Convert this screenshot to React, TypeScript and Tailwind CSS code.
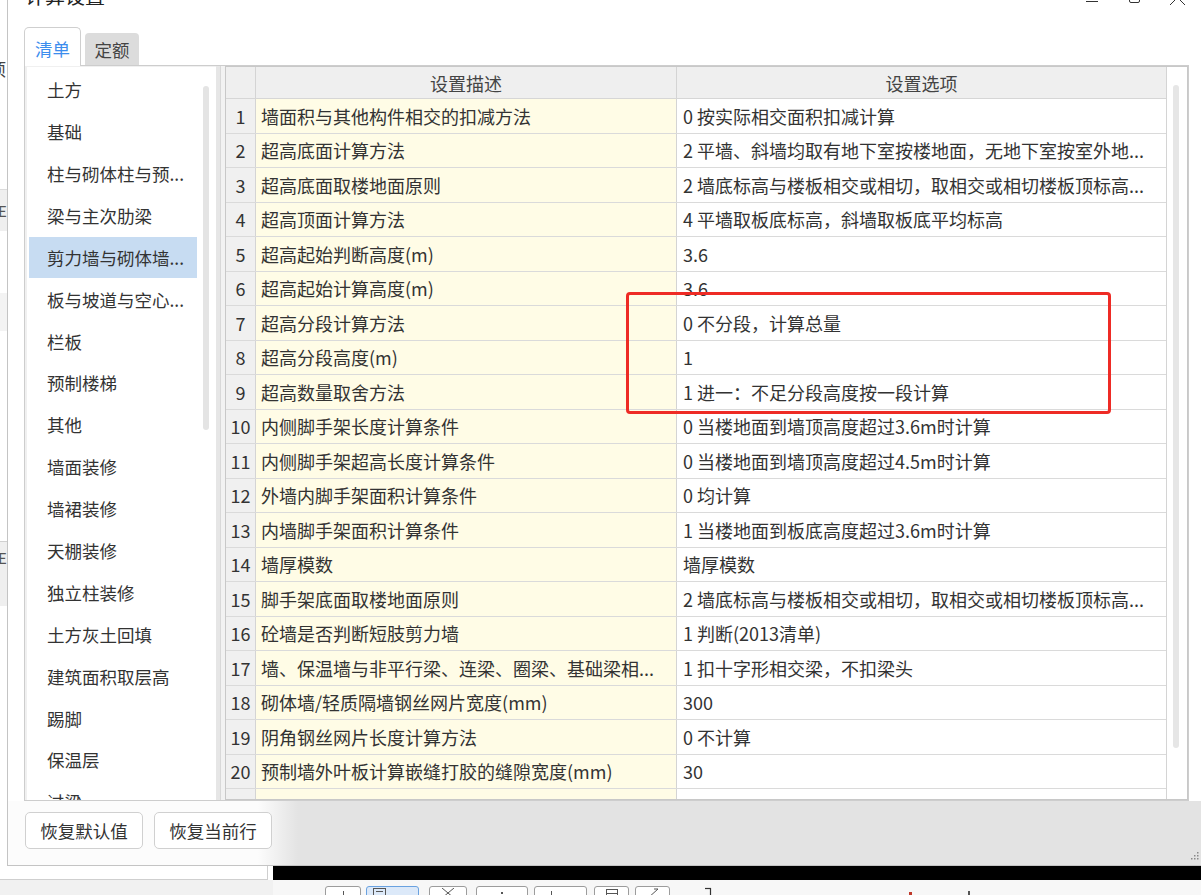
import React from "react";

const rows: [string, string][] = [
  ["墙面积与其他构件相交的扣减方法", "0 按实际相交面积扣减计算"],
  ["超高底面计算方法", "2 平墙、斜墙均取有地下室按楼地面，无地下室按室外地..."],
  ["超高底面取楼地面原则", "2 墙底标高与楼板相交或相切，取相交或相切楼板顶标高..."],
  ["超高顶面计算方法", "4 平墙取板底标高，斜墙取板底平均标高"],
  ["超高起始判断高度(m)", "3.6"],
  ["超高起始计算高度(m)", "3.6"],
  ["超高分段计算方法", "0 不分段，计算总量"],
  ["超高分段高度(m)", "1"],
  ["超高数量取舍方法", "1 进一：不足分段高度按一段计算"],
  ["内侧脚手架长度计算条件", "0 当楼地面到墙顶高度超过3.6m时计算"],
  ["内侧脚手架超高长度计算条件", "0 当楼地面到墙顶高度超过4.5m时计算"],
  ["外墙内脚手架面积计算条件", "0 均计算"],
  ["内墙脚手架面积计算条件", "1 当楼地面到板底高度超过3.6m时计算"],
  ["墙厚模数", "墙厚模数"],
  ["脚手架底面取楼地面原则", "2 墙底标高与楼板相交或相切，取相交或相切楼板顶标高..."],
  ["砼墙是否判断短肢剪力墙", "1 判断(2013清单)"],
  ["墙、保温墙与非平行梁、连梁、圈梁、基础梁相...", "1 扣十字形相交梁，不扣梁头"],
  ["砌体墙/轻质隔墙钢丝网片宽度(mm)", "300"],
  ["阴角钢丝网片长度计算方法", "0 不计算"],
  ["预制墙外叶板计算嵌缝打胶的缝隙宽度(mm)", "30"],
];

const lastRow: [string, string] = ["预制墙外叶板计算打胶长度的计算方式", "1 按外叶板外边线计算"];

const listItems = [
  "土方",
  "基础",
  "柱与砌体柱与预...",
  "梁与主次肋梁",
  "剪力墙与砌体墙...",
  "板与坡道与空心...",
  "栏板",
  "预制楼梯",
  "其他",
  "墙面装修",
  "墙裙装修",
  "天棚装修",
  "独立柱装修",
  "土方灰土回填",
  "建筑面积取层高",
  "踢脚",
  "保温层",
  "过梁",
];

export default function App() {
  return (
    <div className="relative flex h-[895px] w-[1201px] flex-col overflow-hidden bg-white font-['Noto_Sans_CJK_SC','Noto_Sans',sans-serif] text-[#333]">
      {/* top section */}
      <div className="flex h-[866px] shrink-0">
        {/* underlying window strip */}
        <div className="flex w-[7px] shrink-0 flex-col overflow-hidden bg-white">
          <div className="h-[60px] shrink-0" />
          <div className="-ml-[11px] h-[18px] shrink-0 text-[17px] leading-[18px] text-[#444]">项</div>
          <div className="h-[111px] shrink-0" />
          <div className="flex h-[42px] shrink-0 items-center border-t border-[#dcdcdc] bg-[#efefef]">
            <span className="-ml-[2px] text-[15px] leading-none text-[#555]">E</span>
          </div>
          <div className="h-[62px] shrink-0" />
          <div className="h-[38px] shrink-0 bg-[#f3f3f3]" />
          <div className="h-[210px] shrink-0" />
          <div className="flex h-[65px] shrink-0 items-start border-t border-[#d0d0d0] bg-[#efefef] pt-[8px]">
            <span className="-ml-[2px] text-[15px] leading-none text-[#555]">E</span>
          </div>
        </div>

        {/* dialog */}
        <div className="flex flex-1 flex-col border-b border-l border-[#c4c4c4] bg-white">
          {/* title bar */}
          <div className="flex h-[27px] shrink-0 items-start pl-[17px]">
            <span className="-mt-[14px] text-[20px] leading-[20px] text-[#222]">计算设置</span>
            <svg className="-mt-[12px] ml-auto mr-[14px] h-[20px] w-[102px]" viewBox="0 0 102 20" fill="none" stroke="#333" strokeWidth="1">
              <line x1="1" y1="13.5" x2="13" y2="13.5" />
              <rect x="44.5" y="4.5" width="10" height="10" rx="1.5" />
              <line x1="85" y1="2" x2="100" y2="17" />
              <line x1="100" y1="2" x2="85" y2="17" />
            </svg>
          </div>

          {/* tabs */}
          <div className="flex h-[38px] shrink-0 items-end pl-[16px]">
            <div className="relative z-10 -mb-px flex h-[39px] w-[57px] items-center justify-center rounded-t-[5px] border border-b-0 border-[#cfcfcf] bg-white pt-[3px] text-[17.5px] leading-none text-[#3b8ded]">
              清单
            </div>
            <div className="ml-[4px] flex h-[32px] w-[54px] items-center justify-center rounded-t-[4px] bg-[#dcdcdc] pt-[2px] text-[17.5px] leading-none text-[#444]">
              定额
            </div>
          </div>

          {/* panel */}
          <div className="ml-[16px] flex h-[736px] w-[1165px] shrink-0 border border-[#cdcdcd] bg-[#f0f0f0] pl-[2px]">
            {/* list */}
            <div className="mt-[1px] flex w-[189px] shrink-0 overflow-hidden bg-white">
              <div className="w-[172px] shrink-0 pt-[2px]">
                {listItems.map((t, i) => (
                  <div
                    key={i}
                    className={
                      "ml-[2px] flex h-[41.9px] w-[168px] items-center whitespace-nowrap pl-[18px] text-[17.5px] leading-none text-[#333] " +
                      (i === 4 ? "bg-[#c7dcf2]" : "")
                    }
                  >
                    {t}
                  </div>
                ))}
              </div>
              <div className="pl-[4px] pt-[19px]">
                <div className="h-[344px] w-[6px] rounded-full bg-[#e4e4e4]" />
              </div>
            </div>

            {/* splitter */}
            <div className="flex w-[9px] shrink-0">
              <div className="w-[4px] bg-[#e6e6e6]" />
              <div className="w-[1px] bg-[#d8d8d8]" />
              <div className="flex-1 bg-[#f2f2f2]" />
            </div>

            {/* table */}
            <div className="flex w-[963px] shrink-0 overflow-hidden border border-[#c8c8c8] bg-white">
              <div className="flex w-[940px] shrink-0 flex-col">
                <div className="flex h-[32px] shrink-0 border-b border-[#d6d6d6] bg-[#efefef] text-[18px] leading-none text-[#444]">
                  <div className="w-[30px] shrink-0 border-r border-[#d4d4d4]" />
                  <div className="flex w-[421px] shrink-0 items-center justify-center border-r border-[#d4d4d4]">设置描述</div>
                  <div className="flex flex-1 items-center justify-center">设置选项</div>
                </div>
                {rows.map(([d, o], i) => (
                  <div key={i} className="flex h-[34.5px] shrink-0 border-b border-[#dadada] text-[18px] leading-none text-[#333]">
                    <div className="flex w-[30px] shrink-0 items-center justify-center border-r border-[#d4d4d4] bg-[#f0f0f0]">{i + 1}</div>
                    <div className="flex w-[421px] shrink-0 items-center overflow-hidden whitespace-nowrap border-r border-[#d4d4d4] bg-[#fffce6] pl-[5px]">
                      {d}
                    </div>
                    <div className="flex flex-1 items-center overflow-hidden whitespace-nowrap pl-[6px]">{o}</div>
                  </div>
                ))}
                <div className="flex h-[34.5px] shrink-0 border-b border-[#dadada] text-[18px] leading-none text-[#333]">
                  <div className="flex w-[30px] shrink-0 items-start justify-center border-r border-[#d4d4d4] bg-[#f0f0f0] pt-[9px]">21</div>
                  <div className="flex w-[421px] shrink-0 items-start overflow-hidden whitespace-nowrap border-r border-[#d4d4d4] bg-[#fffce6] pl-[5px] pt-[9px]">
                    {lastRow[0]}
                  </div>
                  <div className="flex flex-1 items-start overflow-hidden whitespace-nowrap pl-[6px] pt-[9px]">{lastRow[1]}</div>
                </div>
              </div>
              <div className="w-[21px] shrink-0 border-l border-[#d4d4d4] bg-white pl-[6px] pt-[18px]">
                <div className="h-[663px] w-[6px] rounded-full bg-[#e6e6e6]" />
              </div>
            </div>
          </div>

          {/* buttons area */}
          <div className="relative flex flex-1 items-start bg-[linear-gradient(90deg,#fcfcfc_250px,#e3e3e3_290px)] pl-[17px] pt-[11px]">
            <button className="flex h-[37px] w-[118px] items-center justify-center rounded-[5px] border border-[#d0d0d0] bg-white text-[17.5px] leading-none text-[#333]">
              恢复默认值
            </button>
            <button className="ml-[11px] flex h-[37px] w-[118px] items-center justify-center rounded-[5px] border border-[#d0d0d0] bg-white text-[17.5px] leading-none text-[#333]">
              恢复当前行
            </button>
            <svg className="absolute bottom-[3px] right-[2px] h-[10px] w-[10px]" viewBox="0 0 10 10" fill="#8a8a8a">
              <rect x="8" y="0" width="1.5" height="1.5" />
              <rect x="5" y="3" width="1.5" height="1.5" />
              <rect x="8" y="3" width="1.5" height="1.5" />
              <rect x="2" y="6" width="1.5" height="1.5" />
              <rect x="5" y="6" width="1.5" height="1.5" />
              <rect x="8" y="6" width="1.5" height="1.5" />
            </svg>
          </div>
        </div>
      </div>

      {/* bottom section */}
      <div className="flex flex-1">
        <div className="flex w-[273px] shrink-0 flex-col">
          <div className="h-[14px] w-[268px] shrink-0 border-b border-r border-[#cfcfcf] bg-white" />
          <div className="flex-1 bg-[#f1f1f1]" />
        </div>
        <div className="flex flex-1 flex-col">
          <div className="h-[14px] shrink-0 bg-black" />
          <div className="flex flex-1 items-start bg-[#f7f7f7] pl-[52px] pt-[6px]">
            <div className="flex h-[14px] w-[36px] justify-center rounded-[3px] border border-[#9c9c9c] bg-white pt-[4px]">
              <div className="h-[6px] w-[1px] bg-[#555]" />
            </div>
            <div className="ml-[5px] flex h-[14px] w-[53px] rounded-[3px] border border-[#6aa2e0] bg-[#dce9f9] pl-[6px] pt-[1px]">
              <svg className="h-[10px] w-[14px]" viewBox="0 0 14 10" fill="none" stroke="#555" strokeWidth="1">
                <rect x="0.5" y="0.5" width="12" height="8" />
                <line x1="3" y1="3.5" x2="10" y2="3.5" />
              </svg>
            </div>
            <div className="ml-[10px] flex h-[14px] w-[38px] justify-center rounded-[3px] border border-[#9c9c9c] bg-white pt-[1px]">
              <svg className="h-[10px] w-[14px]" viewBox="0 0 14 10" fill="none" stroke="#555" strokeWidth="1">
                <line x1="1" y1="0" x2="13" y2="10" />
                <line x1="13" y1="0" x2="1" y2="10" />
              </svg>
            </div>
            <div className="ml-[9px] flex h-[14px] w-[52px] justify-center rounded-[3px] border border-[#9c9c9c] bg-white pt-[5px]">
              <div className="h-[2px] w-[2px] bg-[#555]" />
            </div>
            <div className="ml-[6px] flex h-[14px] w-[53px] rounded-[3px] border border-[#9c9c9c] bg-white pl-[16px] pt-[4px]">
              <div className="h-[6px] w-[1px] bg-[#555]" />
            </div>
            <div className="ml-[7px] flex h-[14px] w-[35px] justify-center rounded-[3px] border border-[#9c9c9c] bg-white pt-[2px]">
              <svg className="h-[10px] w-[14px]" viewBox="0 0 14 10" fill="none" stroke="#555" strokeWidth="1">
                <rect x="1.5" y="0.5" width="11" height="9" />
                <line x1="1.5" y1="4.5" x2="12.5" y2="4.5" />
              </svg>
            </div>
            <div className="ml-[6px] flex h-[14px] w-[35px] justify-center rounded-[3px] border border-[#9c9c9c] bg-white pt-[1px]">
              <svg className="h-[10px] w-[14px]" viewBox="0 0 14 10" fill="none" stroke="#555" strokeWidth="1">
                <line x1="2" y1="10" x2="12" y2="1" />
                <line x1="8" y1="1" x2="12" y2="1" />
              </svg>
            </div>
            <svg className="ml-[34px] mt-[1px] h-[10px] w-[10px]" viewBox="0 0 10 10" fill="none" stroke="#333" strokeWidth="1.2">
              <line x1="1" y1="1.5" x2="7" y2="1.5" />
              <line x1="6.5" y1="1" x2="6.5" y2="10" />
            </svg>
            <div className="ml-[195px] mt-[6px] h-[3px] w-[3px] bg-[#c0392b]" />
            <div className="ml-[56px] mt-[5px] h-[4px] w-[2px] bg-[#555]" />
          </div>
        </div>
      </div>

      {/* red highlight box */}
      <div className="pointer-events-none absolute left-[626px] top-[292px] h-[122px] w-[485px] rounded-[4px] border-[3px] border-[#ee2b25]" />
    </div>
  );
}
